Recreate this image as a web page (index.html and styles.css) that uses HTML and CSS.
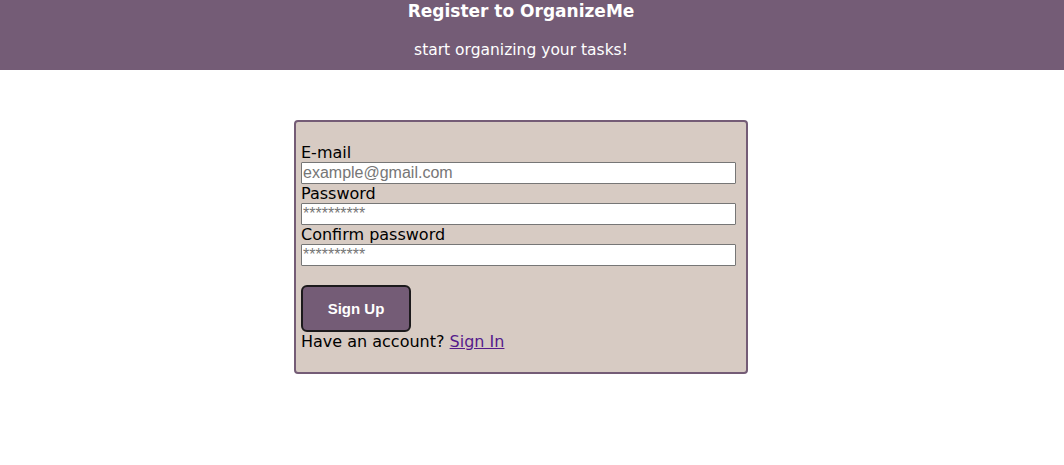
FILE: index.html
```html
<!DOCTYPE html>
<html>
<head>
<meta charset="utf-8">
<link rel="stylesheet" href="styles.css">
</head>
<body>
<header class="top">
  <h1 class="title">Register to OrganizeMe</h1>
  <p class="subtitle">start organizing your tasks!</p>
</header>
<main class="page">
  <form class="card">
    <label class="label" for="email">E-mail</label>
    <input class="field" id="email" type="text" placeholder="example@gmail.com">
    <label class="label" for="pw">Password</label>
    <input class="field" id="pw" type="text" placeholder="**********">
    <label class="label" for="pw2">Confirm password</label>
    <input class="field" id="pw2" type="text" placeholder="**********">
    <button class="btn" type="button">Sign Up</button>
    <p class="alt">Have an account? <a class="link" href="#">Sign In</a></p>
  </form>
</main>
</body>
</html>
```
FILE: styles.css
```css
* { box-sizing: border-box; }
body {
  margin: 0;
  font-family: "DejaVu Sans", sans-serif;
  background: #ffffff;
  color: #000;
}
.top {
  background: #745c76;
  color: #fff;
  height: 70px;
  text-align: center;
  padding-top: 1px;
  padding-right: 22px;
}
.title {
  margin: 0;
  font-size: 17px;
  font-weight: bold;
  line-height: 21px;
}
.subtitle {
  margin: 18px 0 0;
  font-size: 15.5px;
  line-height: 20px;
}
.page {
  display: flex;
  justify-content: center;
  padding-top: 50px;
  padding-right: 22px;
}
.card {
  width: 454px;
  background: #d7cbc3;
  border: 2px solid #745c76;
  border-radius: 4px;
  padding: 21px 10px 20px 5px;
  display: flex;
  flex-direction: column;
  align-items: flex-start;
}
.label {
  font-size: 16px;
  line-height: 19px;
  height: 19px;
}
.field {
  width: 435px;
  height: 22px;
  border: 1px solid #767676;
  border-radius: 1px;
  background: #fff;
  padding: 0 1px;
  font-family: "Liberation Sans", Arial, sans-serif;
  font-size: 16px;
  margin: 0;
}
.field::placeholder { color: #767676; }
.btn {
  margin-top: 19px;
  width: 110px;
  height: 47px;
  background: #745c76;
  border: 2px solid #1c1a1c;
  border-radius: 6px;
  color: #fff;
  font-family: "Liberation Sans", Arial, sans-serif;
  font-size: 15px;
  font-weight: bold;
}
.alt {
  margin: 0;
  font-size: 16px;
  line-height: 20px;
}
.link { color: #551a8b; }
```
